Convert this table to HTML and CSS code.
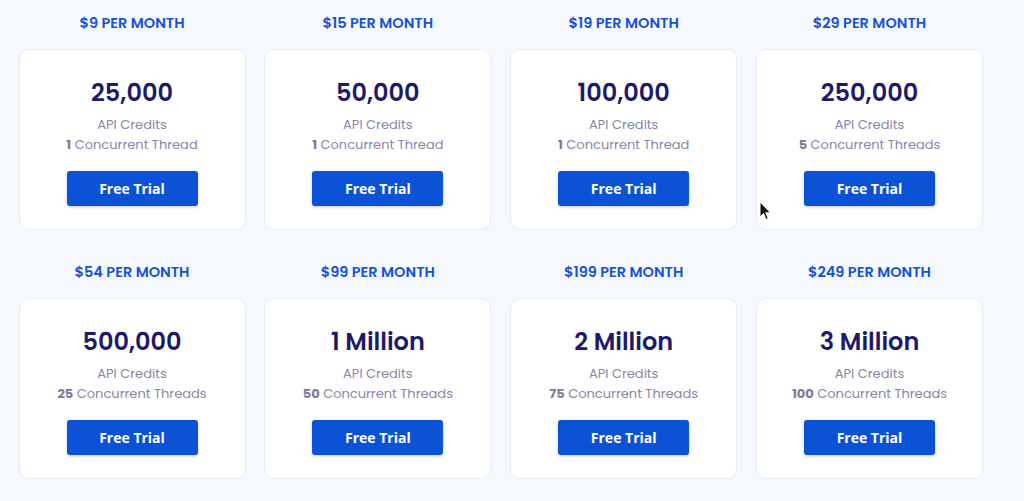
FILE: index.html
```html
<!DOCTYPE html>
<html lang="en">
<head>
<meta charset="utf-8">
<title>Pricing</title>
<link rel="stylesheet" href="styles.css">
</head>
<body>
<main class="plans">
  <section class="plan">
    <h3 class="plan-price">$9 PER MONTH</h3>
    <div class="card">
      <div class="credits">25,000</div>
      <div class="label">API Credits</div>
      <div class="label"><b>1</b> Concurrent Thread</div>
      <a class="btn" href="#">Free Trial</a>
    </div>
  </section>
  <section class="plan">
    <h3 class="plan-price">$15 PER MONTH</h3>
    <div class="card">
      <div class="credits">50,000</div>
      <div class="label">API Credits</div>
      <div class="label"><b>1</b> Concurrent Thread</div>
      <a class="btn" href="#">Free Trial</a>
    </div>
  </section>
  <section class="plan">
    <h3 class="plan-price">$19 PER MONTH</h3>
    <div class="card">
      <div class="credits">100,000</div>
      <div class="label">API Credits</div>
      <div class="label"><b>1</b> Concurrent Thread</div>
      <a class="btn" href="#">Free Trial</a>
    </div>
  </section>
  <section class="plan">
    <h3 class="plan-price">$29 PER MONTH</h3>
    <div class="card">
      <div class="credits">250,000</div>
      <div class="label">API Credits</div>
      <div class="label"><b>5</b> Concurrent Threads</div>
      <a class="btn" href="#">Free Trial</a>
    </div>
  </section>
  <section class="plan">
    <h3 class="plan-price">$54 PER MONTH</h3>
    <div class="card">
      <div class="credits">500,000</div>
      <div class="label">API Credits</div>
      <div class="label"><b>25</b> Concurrent Threads</div>
      <a class="btn" href="#">Free Trial</a>
    </div>
  </section>
  <section class="plan">
    <h3 class="plan-price">$99 PER MONTH</h3>
    <div class="card">
      <div class="credits">1 Million</div>
      <div class="label">API Credits</div>
      <div class="label"><b>50</b> Concurrent Threads</div>
      <a class="btn" href="#">Free Trial</a>
    </div>
  </section>
  <section class="plan">
    <h3 class="plan-price">$199 PER MONTH</h3>
    <div class="card">
      <div class="credits">2 Million</div>
      <div class="label">API Credits</div>
      <div class="label"><b>75</b> Concurrent Threads</div>
      <a class="btn" href="#">Free Trial</a>
    </div>
  </section>
  <section class="plan">
    <h3 class="plan-price">$249 PER MONTH</h3>
    <div class="card">
      <div class="credits">3 Million</div>
      <div class="label">API Credits</div>
      <div class="label"><b>100</b> Concurrent Threads</div>
      <a class="btn" href="#">Free Trial</a>
    </div>
  </section>
</main>
<svg class="cursor" width="14" height="20" viewBox="0 0 14 20" aria-hidden="true">
  <path d="M1 1 L1 16 L4.5 12.5 L7 18.5 L9.3 17.5 L6.8 11.8 L11.5 11.8 Z" fill="#111" stroke="#fff" stroke-width="1"/>
</svg>
</body>
</html>
```

FILE: styles.css
```css
html, body {
  margin: 0;
  padding: 0;
}
body {
  background: #f5f8fd;
  font-family: "Poppins", "Noto Sans", "Open Sans", sans-serif;
  width: 1024px;
  height: 501px;
  overflow: hidden;
  position: relative;
}
.plans {
  display: grid;
  grid-template-columns: repeat(4, 227px);
  column-gap: 18.83px;
  row-gap: 19px;
  padding-left: 18.5px;
  padding-top: 0;
}
.plan {
  display: flex;
  flex-direction: column;
}
.plan-price {
  margin: 0;
  height: 49px;
  padding-top: 12.5px;
  box-sizing: border-box;
  line-height: 20px;
  text-align: center;
  font-size: 14.5px;
  font-weight: 600;
  color: #1652d8;
}
.card {
  height: 181px;
  box-sizing: border-box;
  background: #ffffff;
  border: 1px solid #e5ecf6;
  border-radius: 10px;
  display: flex;
  flex-direction: column;
  align-items: center;
  padding-top: 27px;
}
.credits {
  font-size: 24px;
  font-weight: 600;
  line-height: 32px;
  color: #1d1a6b;
  margin-bottom: 6px;
}
.label {
  font-size: 13px;
  line-height: 20px;
  color: #8986a6;
}
.label b {
  font-weight: 700;
  color: #7d7a98;
}
.btn {
  margin-top: 16px;
  width: 131px;
  height: 35px;
  border-radius: 3px;
  background: #0c52d6;
  box-shadow: 0 1px 3px rgba(12, 40, 110, 0.25);
  color: #ffffff;
  text-decoration: none;
  font-family: "Open Sans", "Noto Sans", sans-serif;
  font-weight: 700;
  font-size: 14px;
  display: flex;
  align-items: center;
  justify-content: center;
}
.cursor {
  position: absolute;
  left: 759px;
  top: 201px;
}
```
